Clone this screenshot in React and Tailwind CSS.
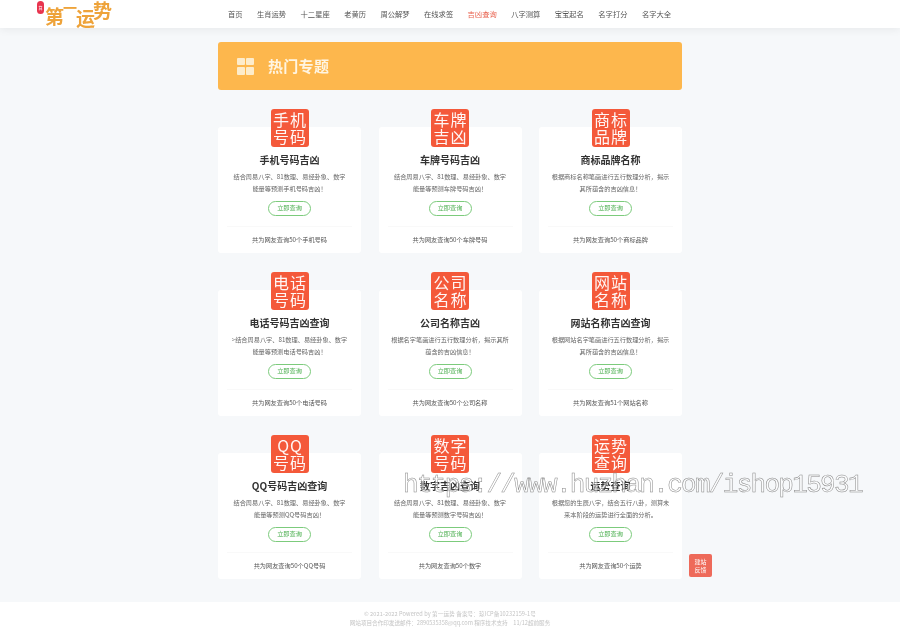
const FONT = "font-['Noto_Sans_CJK_SC','Noto_Sans',sans-serif]";

const navItems = ['首页', '生肖运势', '十二星座', '老黄历', '周公解梦', '在线求签', '吉凶查询', '八字测算', '宝宝起名', '名字打分', '名字大全'];

const cards = [
  { icon: ['手机', '号码'], title: '手机号码吉凶', desc: ['结合周易八字、81数理、易经卦象、数字', '能量等预测手机号码吉凶！'], count: '共为网友查询50个手机号码' },
  { icon: ['车牌', '吉凶'], title: '车牌号码吉凶', desc: ['结合周易八字、81数理、易经卦象、数字', '能量等预测车牌号码吉凶！'], count: '共为网友查询50个车牌号码' },
  { icon: ['商标', '品牌'], title: '商标品牌名称', desc: ['根据商标名称笔画进行五行数理分析，揭示', '其所蕴含的吉凶信息！'], count: '共为网友查询50个商标品牌' },
  { icon: ['电话', '号码'], title: '电话号码吉凶查询', desc: ['>结合周易八字、81数理、易经卦象、数字', '能量等预测电话号码吉凶！'], count: '共为网友查询50个电话号码' },
  { icon: ['公司', '名称'], title: '公司名称吉凶', desc: ['根据名字笔画进行五行数理分析，揭示其所', '蕴含的吉凶信息！'], count: '共为网友查询50个公司名称' },
  { icon: ['网站', '名称'], title: '网站名称吉凶查询', desc: ['根据网站名字笔画进行五行数理分析，揭示', '其所蕴含的吉凶信息！'], count: '共为网友查询51个网站名称' },
  { icon: ['QQ', '号码'], title: 'QQ号码吉凶查询', desc: ['结合周易八字、81数理、易经卦象、数字', '能量等预测QQ号码吉凶！'], count: '共为网友查询50个QQ号码' },
  { icon: ['数字', '号码'], title: '数字吉凶查询', desc: ['结合周易八字、81数理、易经卦象、数字', '能量等预测数字号码吉凶！'], count: '共为网友查询50个数字' },
  { icon: ['运势', '查询'], title: '运势查询', desc: ['根据您的生辰八字，结合五行八卦，测算未', '来本阶段的运势进行全面的分析。'], count: '共为网友查询50个运势' },
];

function Card({ card }) {
  return (
    <div className="h-[126px] bg-white rounded-[3px] flex flex-col items-center">
      <div className="w-[38px] h-[38px] -mt-[18px] bg-[#f4593a] rounded-[3px] flex flex-col items-center justify-center text-white/95 text-[16px] leading-[17px] tracking-[1px] pl-[1px]">
        <span>{card.icon[0]}</span>
        <span>{card.icon[1]}</span>
      </div>
      <h3 className="mt-[6px] text-[10px] leading-[14px] font-bold text-[#333]">{card.title}</h3>
      <div className="mt-[4px] text-[6.2px] leading-[12px] text-[#666] text-center">
        {card.desc.map((line) => (
          <p key={line} className="whitespace-nowrap">{line}</p>
        ))}
      </div>
      <button className="mt-[6px] w-[43px] h-[15px] rounded-full border border-[#7ccb7c] text-[#4caf50] text-[6.2px] leading-none flex items-center justify-center">
        立即查询
      </button>
      <div className="mt-[10px] w-[125px] border-t border-[#f9f9f9]" />
      <p className="mt-[8px] text-[6.2px] leading-[10px] text-[#555] whitespace-nowrap">{card.count}</p>
    </div>
  );
}

export default function App() {
  return (
    <div className={`relative w-[900px] h-[640px] overflow-hidden bg-[#f6f8fa] ${FONT}`}>
      <div className="h-full blur-[0.35px]">
        {/* header */}
        <header className="h-[28px] bg-white shadow-[0_2px_8px_rgba(0,0,0,0.06)] flex items-center">
          <div className="w-[228px] pl-[37px] flex items-start h-full shrink-0">
            <span className="w-[7px] h-[13px] mt-[1px] bg-[#e8344e] rounded-full text-white text-[4px] flex items-center justify-center">算</span>
            <div className="flex items-start ml-[1px] text-[#eea33a] text-[19px] leading-none font-bold whitespace-nowrap">
              <span className="mt-[6px]">第</span>
              <span className="text-[14px] -ml-[1px]">一</span>
              <span className="mt-[8px] -ml-[1px]">运</span>
              <span className="-ml-[2px]">势</span>
            </div>
          </div>
          <nav className="flex gap-[14.4px] text-[7.3px] text-[#555] whitespace-nowrap">
            {navItems.map((item) => (
              <a key={item} className={item === '吉凶查询' ? 'text-[#e8604c]' : ''}>{item}</a>
            ))}
          </nav>
        </header>

        <main className="w-[464px] ml-[218px] mt-[14px]">
          {/* banner */}
          <div className="h-[48px] bg-[#fdb74d] rounded-[3px] flex items-center pl-[19px]">
            <div className="grid grid-cols-2 gap-[1.5px] w-[17px] h-[17px]">
              <span className="bg-[#fdeccb] rounded-[1px]" />
              <span className="bg-[#fdeccb] rounded-[1px]" />
              <span className="bg-[#fdeccb] rounded-[1px]" />
              <span className="bg-[#fdeccb] rounded-[1px]" />
            </div>
            <h2 className="ml-[14px] text-[15px] font-bold text-[#fff5e2] tracking-[0.3px]">热门专题</h2>
          </div>

          {/* cards */}
          <div className="mt-[37px] grid grid-cols-3 gap-x-[17.5px] gap-y-[37px]">
            {cards.map((card) => (
              <Card key={card.title} card={card} />
            ))}
          </div>
        </main>

        {/* footer */}
        <footer className="absolute left-0 right-0 top-[602px] h-[38px] bg-white pt-[8px] text-center text-[5.6px] leading-[9px] text-[#c4c4c4]">
          <p className="tracking-[0.1px]">© 2021-2022 Powered by 第一运势 备案号：琼ICP备10232159-1号</p>
          <p>网站项目合作印发送邮件：2890535358@qq.com 程序技术支持　11/12超前服务</p>
        </footer>

        {/* floating feedback button */}
        <div className="absolute left-[689px] top-[554px] w-[23px] h-[23px] bg-[#ee6a5a] rounded-[2px] flex flex-col items-center justify-center text-white text-[6px] leading-[8px]">
          <span>建站</span>
          <span>反馈</span>
        </div>
      </div>

      {/* watermark */}
      <div className="absolute left-[403px] top-[470px] text-[26px] leading-[30px] font-['Liberation_Mono',monospace] text-white/50 [-webkit-text-stroke:0.5px_#888] whitespace-nowrap tracking-[-1.7px] will-change-transform">
        https://www.huzhan.com/ishop15931
      </div>
    </div>
  );
}
